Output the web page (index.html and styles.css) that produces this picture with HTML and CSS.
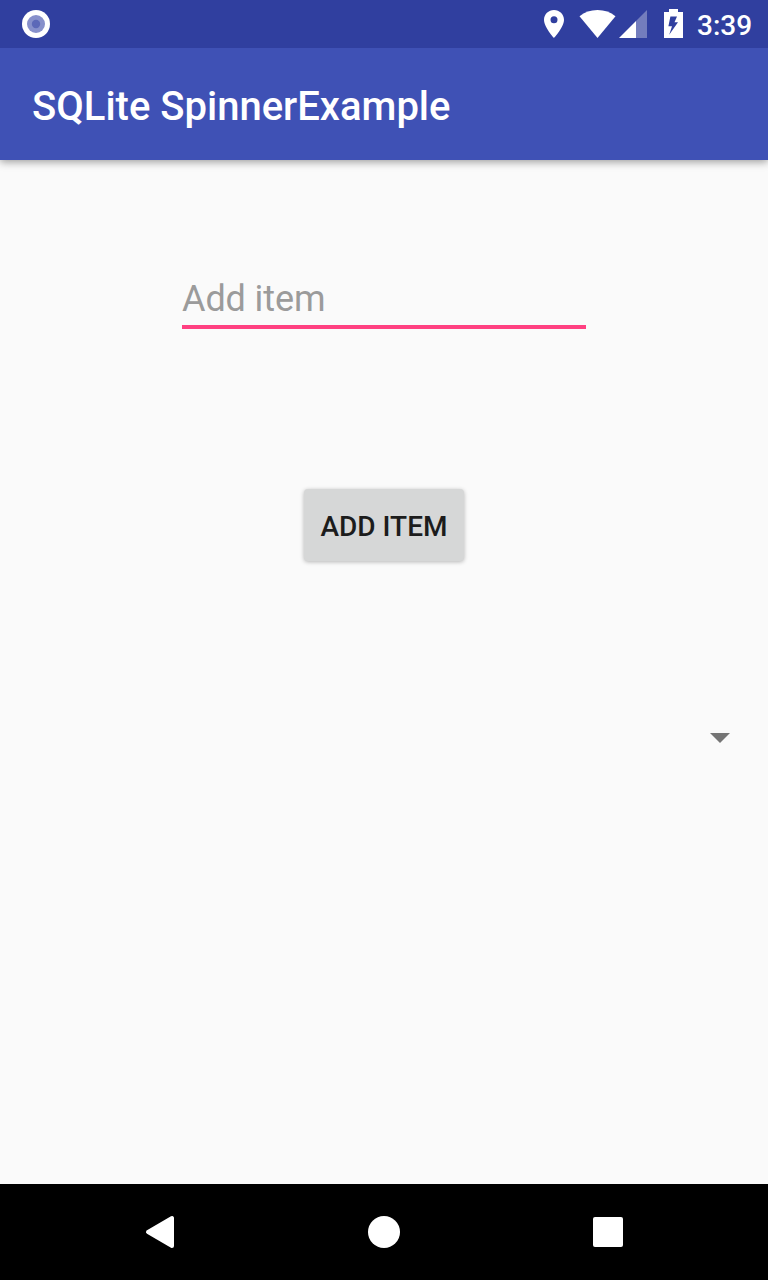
FILE: index.html
```html
<!DOCTYPE html>
<html lang="en">
<head>
<meta charset="utf-8">
<title>SQLite SpinnerExample</title>
<link rel="stylesheet" href="styles.css">
</head>
<body>
<div class="screen">
  <div class="status-bar">
    <svg class="notification" width="28" height="28" viewBox="0 0 28 28">
      <circle cx="14" cy="14" r="14" fill="#fff"/>
      <circle cx="14" cy="14" r="9" fill="#8790cb"/>
      <circle cx="14" cy="14" r="4.2" fill="#5c68b8"/>
    </svg>
    <div class="system-icons">
      <svg class="location" width="20" height="28" viewBox="0 0 20 28">
        <path fill="#fff" fill-rule="evenodd" d="M10 0C4.5 0 0 4.4 0 9.8C0 17.2 10 28 10 28S20 17.2 20 9.8C20 4.4 15.5 0 10 0ZM10 6.3A3.5 3.5 0 1 1 10 13.3A3.5 3.5 0 1 1 10 6.3Z"/>
      </svg>
      <svg class="wifi" width="37" height="28" viewBox="0 0 37 28">
        <path fill="#fff" d="M18.5 28L.5 6.2C5.5 2.2 11.5 0 18.5 0S31.5 2.2 36.5 6.2Z"/>
      </svg>
      <svg class="signal" width="28" height="28" viewBox="0 0 28 28">
        <path fill="#737dbd" d="M17 11L28 0V28H17Z"/>
        <path fill="#fff" d="M0 28L17 11V28Z"/>
      </svg>
      <svg class="battery" width="19" height="29" viewBox="0 0 19 29">
        <path fill="#fff" fill-rule="evenodd" d="M5 0H14V3H19V29H0V3H5ZM6.4 7.5L4.4 17.2H8L5.2 25.8L14 13.2H10.5L13 7.5Z"/>
      </svg>
      <span class="clock">3:39</span>
    </div>
  </div>
  <header class="app-bar"><h1 class="title">SQLite SpinnerExample</h1></header>
  <main class="content">
    <input class="item-input" type="text" placeholder="Add item" aria-label="Add item">
    <button class="add-button" type="button">ADD ITEM</button>
    <div class="spinner">
      <svg width="20" height="10" viewBox="0 0 20 10"><path fill="#757575" d="M0 0H20L10 10Z"/></svg>
    </div>
  </main>
  <nav class="nav-bar">
    <svg width="224" height="96" viewBox="0 0 224 96"><path fill="#fff" stroke="#fff" stroke-width="4" stroke-linejoin="round" d="M100 48L124 34V62Z"/></svg>
    <svg width="224" height="96" viewBox="0 0 224 96"><circle cx="112" cy="48" r="16" fill="#fff"/></svg>
    <svg width="224" height="96" viewBox="0 0 224 96"><rect x="97" y="33" width="30" height="30" rx="2" fill="#fff"/></svg>
  </nav>
</div>
</body>
</html>
```
FILE: styles.css
```css
* { box-sizing: border-box; }
body {
  margin: 0;
  background: #fafafa;
  font-family: Roboto, sans-serif;
}
svg { display: block; flex: none; }
.screen {
  display: flex;
  flex-direction: column;
  width: 768px;
  height: 1280px;
  overflow: hidden;
}
.status-bar {
  position: relative;
  z-index: 1;
  display: flex;
  justify-content: space-between;
  height: 48px;
  padding: 0 17px 0 22px;
  background: #303f9f;
}
.notification { margin-top: 10px; }
.system-icons { display: flex; align-items: flex-start; padding-top: 10px; }
.wifi { margin-left: 15px; }
.signal { margin-left: 3px; }
.battery { margin: -1px 14px 0 17px; }
.clock {
  width: 54px;
  margin-top: -1px;
  color: #fff;
  font-size: 28px;
  font-weight: 500;
  line-height: 33px;
  white-space: nowrap;
}
.app-bar {
  display: flex;
  align-items: center;
  height: 112px;
  padding: 6px 32px 0;
  background: #3f51b5;
  box-shadow: 0 2px 8px rgba(0, 0, 0, .38);
}
.title {
  margin: 0;
  color: #fff;
  font-size: 40px;
  font-weight: 500;
  line-height: 48px;
}
.content {
  display: flex;
  flex: 1;
  flex-direction: column;
  align-items: center;
  padding-top: 113px;
}
.item-input {
  width: 404px;
  height: 56px;
  padding: 0 0 1px;
  border: 0;
  border-bottom: 4px solid #ff4081;
  outline: 0;
  background: transparent;
  color: #212121;
  font: 400 36px/42px Roboto, sans-serif;
}
.item-input::placeholder { color: #9b9b9b; opacity: 1; letter-spacing: -.1px; }
.add-button {
  width: 160px;
  height: 72px;
  margin-top: 160px;
  padding: 4px 0 0;
  border: 0;
  border-radius: 4px;
  background: #d6d7d7;
  box-shadow: 0 1px 4px rgba(0, 0, 0, .28);
  color: #1c1c1c;
  font: 500 28px/34px Roboto, sans-serif;
  white-space: nowrap;
}
.spinner {
  display: flex;
  align-items: center;
  justify-content: flex-end;
  width: 100%;
  height: 48px;
  margin-top: 153px;
  padding-right: 38px;
}
.nav-bar {
  display: flex;
  justify-content: center;
  height: 96px;
  background: #000;
}
```
